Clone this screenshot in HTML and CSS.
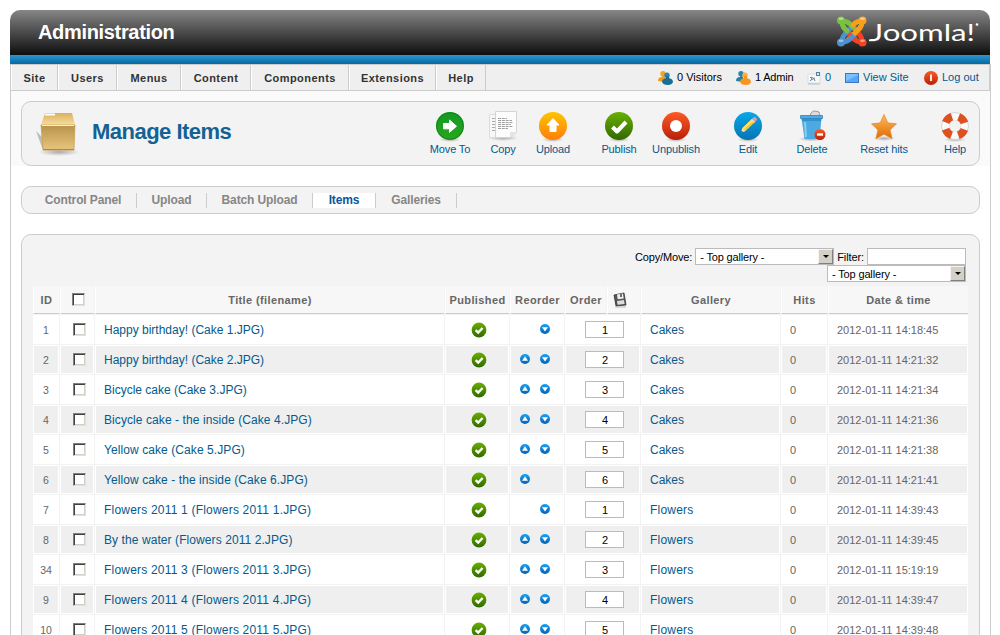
FILE: index.html
```
<!DOCTYPE html>
<html lang="en">
<head>
<meta charset="utf-8">
<title>Administration</title>
<link rel="stylesheet" href="styles.css">
</head>
<body>
<svg class="defs" width="0" height="0">
<defs>
<linearGradient id="gGreen" x2="0" y2="1"><stop stop-color="#69b000"/><stop offset="1" stop-color="#336800"/></linearGradient>
<linearGradient id="gMove" x2="0" y2="1"><stop stop-color="#119a24"/><stop offset="1" stop-color="#2aa51c"/></linearGradient>
<linearGradient id="gUp" x2="0" y2="1"><stop stop-color="#ffc400"/><stop offset="1" stop-color="#ff7e08"/></linearGradient>
<linearGradient id="gRed" x2="0" y2="1"><stop stop-color="#ff5a24"/><stop offset="1" stop-color="#b8200c"/></linearGradient>
<linearGradient id="gBlue" x2="0" y2="1"><stop stop-color="#06a9e8"/><stop offset="1" stop-color="#0873b4"/></linearGradient>
<linearGradient id="gDot" x2="0" y2="1"><stop stop-color="#1ba2f6"/><stop offset="1" stop-color="#0560b5"/></linearGradient>
<linearGradient id="gStar" x2="0" y2="1"><stop stop-color="#ffb95c"/><stop offset="1" stop-color="#de6d00"/></linearGradient>
<linearGradient id="gBox" x2="0" y2="1"><stop stop-color="#b8924c"/><stop offset="1" stop-color="#e8c67c"/></linearGradient>
<linearGradient id="gLid" x2="0" y2="1"><stop stop-color="#d9b25f"/><stop offset="1" stop-color="#f8dd9f"/></linearGradient>
<radialGradient id="gShade"><stop stop-color="#000" stop-opacity=".3"/><stop offset="1" stop-color="#000" stop-opacity="0"/></radialGradient>
<symbol id="ok" viewBox="0 0 16 16"><circle cx="8" cy="8" r="7.4" fill="url(#gGreen)"/><path d="M4.6 8.2l2.6 2.4 4.4-4.6" fill="none" stroke="#fff" stroke-width="2.4"/></symbol>
<symbol id="up" viewBox="0 0 10 10"><circle cx="5" cy="5" r="5" fill="url(#gDot)"/><path d="M5 2.2L8 6.8H2z" fill="#fff"/></symbol>
<symbol id="dn" viewBox="0 0 10 10"><circle cx="5" cy="5" r="5" fill="url(#gDot)"/><path d="M5 7.6L8 3.2H2z" fill="#fff"/></symbol>
<symbol id="shade" viewBox="0 0 32 6"><ellipse cx="16" cy="3" rx="13" ry="3" fill="url(#gShade)"/></symbol>
</defs>
</svg>
<div class="page">
<header class="head">
  <h1>Administration</h1>
  <svg class="logo" width="146" height="36" viewBox="0 0 146 36">
    <g fill="none" stroke-width="4.800" stroke-linecap="round" stroke-linejoin="round">
      <path d="M6 7q0 5 3 8l10 10" stroke="#7ac143"/>
      <path d="M26 7q0 5-3 8L12 26" stroke="#f9a01b"/>
      <path d="M26 28q-5 0-8-3l-8-8" stroke="#f44321"/>
      <path d="M26 28q0-5-3-8l-4-4" stroke="#f44321"/>
      <path d="M6 28q0-5 3-8l5-5" stroke="#5091cd"/>
      <path d="M6 28q5 0 8-3l5-5" stroke="#5091cd"/>
      <path d="M6 7q5 0 8 3l6 6M6 7q0 5 3 8l2 2" stroke="#7ac143"/>
      <path d="M26 7q-5 0-8 3l-1 1M26 7q0 5-3 8l-4 4" stroke="#f9a01b"/>
    </g>
    <circle cx="5" cy="6.500" r="4" fill="#7ac143"/><circle cx="26.500" cy="6.500" r="4" fill="#f9a01b"/><circle cx="5" cy="28.500" r="4" fill="#5091cd"/><circle cx="26.500" cy="28.500" r="4" fill="#f44321"/>
    <g fill="#fff" opacity=".45"><ellipse cx="5" cy="4.800" rx="2.500" ry="1.300"/><ellipse cx="26.500" cy="4.800" rx="2.500" ry="1.300"/><ellipse cx="5" cy="26.800" rx="2.500" ry="1.300"/><ellipse cx="26.500" cy="26.800" rx="2.500" ry="1.300"/></g>
    <path d="M33 26.300h6" stroke="#fff" stroke-width="1.800"/>
    <text class="wordmark" x="34" y="27" textLength="105" lengthAdjust="spacingAndGlyphs">Joomla!</text>
    <circle cx="141" cy="10.500" r="1.300" fill="#fff"/>
  </svg>
</header>
<div class="stripe"></div>
<div class="body">
<nav class="menu">
  <a class="m1">Site</a><a class="m2">Users</a><a class="m3">Menus</a><a class="m4">Content</a><a class="m5">Components</a><a class="m6">Extensions</a><a class="m7">Help</a>
  <div class="status">
    <span class="s1"><svg width="15" height="15" viewBox="0 0 15 15"><circle cx="5" cy="3.700" r="2.700" fill="#f9a21c"/><path d="M0 11q0-4 4-4l1-2 2 2v5z" fill="#f59a18"/><circle cx="9" cy="5.300" r="2.700" fill="#2388b1"/><path d="M4 12q0-3 4-4V6h3v2q4 1 4 4-1 3-5 3-5 0-6-3z" fill="#176f96"/></svg>0 Visitors</span>
    <span class="s2"><svg width="15" height="15" viewBox="0 0 15 15"><circle cx="5" cy="3.700" r="2.700" fill="#2388b1"/><path d="M0 11q0-4 4-4l1-2 2 2v5z" fill="#2481a8"/><circle cx="9" cy="5.300" r="2.700" fill="#fdb033"/><path d="M4 12q0-3 4-4V6h3v2q4 1 4 4-1 3-5 3-5 0-6-3z" fill="#f89420"/></svg>1 Admin</span>
    <a class="s3"><svg width="15" height="14" viewBox="0 0 15 14"><path d="M2 3h12v9H2z" fill="#f8f8f8" stroke="#ddd"/><path d="M2 13h12" stroke="#bbb"/><path d="M4 6l2 2-2 2M5 6q4 1 4 4M5 9l4-2" stroke="#6b8ba5" fill="none"/><rect x="10.500" y="1.500" width="3" height="3" fill="#cfe3f2" stroke="#5580a0"/></svg>0</a>
    <a class="s4"><svg width="14" height="12" viewBox="0 0 14 12"><rect x=".5" y="1.500" width="13" height="9" fill="#7cc0ff" stroke="#3b78bd"/><path d="M1 9l12-6v7H1z" fill="#5aa5f5"/></svg>View Site</a>
    <a class="s5"><svg width="14" height="14" viewBox="0 0 14 14"><circle cx="7" cy="7" r="7" fill="url(#gRed)"/><path d="M7 3.500v6.500" stroke="#fff" stroke-width="1.800"/></svg>Log out</a>
  </div>
</nav>
<section class="toolwrap">
<div class="toolbar">
  <svg class="box" width="48" height="48" viewBox="0 0 48 48"><ellipse cx="24" cy="42" rx="21" ry="4" fill="url(#gShade)"/><path d="M1 21l7 19V28z" fill="#888" opacity=".5"/><path d="M10 3h27l3 12H6z" fill="url(#gLid)"/><path d="M6 15h34l-1 25H8z" fill="url(#gBox)" stroke="#c49c4c" stroke-width=".7"/><path d="M7 15.500h32" stroke="#fff0c0"/><path d="M8 39.500h31" stroke="#b78a38" stroke-width="1.200"/><path d="M10 4.500h10" stroke="#fff" stroke-width="2"/></svg>
  <h2>Manage Items</h2>
  <div class="tools">
    <a class="tool t1"><svg width="32" height="32" viewBox="0 0 32 32"><use href="#shade" y="27" width="32" height="5"/><circle cx="16" cy="16" r="14" fill="url(#gMove)"/><circle cx="16" cy="16" r="13.300" fill="none" stroke="#0b7a15" opacity=".7"/><path d="M9.500 13.500h6V10l7 6.200-7 6.200v-3.600h-6z" fill="#fff" stroke="#fff" stroke-linejoin="round"/></svg>Move To</a>
    <a class="tool t2"><svg width="32" height="32" viewBox="0 0 32 32"><ellipse cx="16" cy="28" rx="15" ry="3" fill="url(#gShade)"/><path d="M2.500 4.500h15v23h-15z" fill="#f7f7f7" stroke="#ddd"/><path d="M5 8.500h3M5 11.500h3M5 14.500h3M5 17.500h3M5 20.500h3" stroke="#aaa"/><path d="M8.500 1.500h21v21l-6 5h-15z" fill="#fcfcfc" stroke="#d4d4d4"/><path d="M29 22l-6 5v-5z" fill="#e4e4e4"/><path d="M11 8.500h9M11 10.500h14M11 12.500h15M11 14.500h13M11 16.500h15M11 18.500h10" stroke="#888" stroke-width=".8" stroke-dasharray="3 .8"/></svg>Copy</a>
    <a class="tool t3"><svg width="32" height="32" viewBox="0 0 32 32"><use href="#shade" y="27" width="32" height="5"/><circle cx="16" cy="16" r="14" fill="url(#gUp)"/><path d="M16 8.500l6 6.500h-3v6.500h-6V15h-3z" fill="#fff" stroke="#fff" stroke-linejoin="round"/></svg>Upload</a>
    <a class="tool t4"><svg width="32" height="32" viewBox="0 0 32 32"><use href="#shade" y="27" width="32" height="5"/><circle cx="16" cy="16" r="14" fill="url(#gGreen)"/><path d="M9.500 17l4.500 4.500 9-9.500" fill="none" stroke="#fff" stroke-width="4" stroke-linejoin="round"/></svg>Publish</a>
    <a class="tool t5"><svg width="32" height="32" viewBox="0 0 32 32"><use href="#shade" y="27" width="32" height="5"/><circle cx="16" cy="16" r="14" fill="url(#gRed)"/><circle cx="16" cy="16" r="6" fill="#fff"/></svg>Unpublish</a>
    <a class="tool t6"><svg width="32" height="32" viewBox="0 0 32 32"><use href="#shade" y="27" width="32" height="5"/><circle cx="16" cy="16" r="14" fill="url(#gBlue)"/><path d="M9 22.500l1.500-4.500 9.500-9 3 3-9.500 9z" fill="#ffc926"/><path d="M10.500 18l1.500 1.200 9.500-8.700L20 9z" fill="#ffe36c"/><path d="M20 9l2-2q3 0 3 3l-2 2z" fill="#e49a9a"/><path d="M19 10l1-1 3 3-1 1z" fill="#ddd"/><path d="M9 22.500l1.500-4.500 3 3z" fill="#f6e2b8"/><path d="M9 22.500l.6-1.800 1.200 1.200z" fill="#222"/></svg>Edit</a>
    <a class="tool t7"><svg width="32" height="32" viewBox="0 0 32 32"><ellipse cx="15" cy="29" rx="13" ry="2.500" fill="url(#gShade)"/><path d="M14 6q1-5 5-5l4 1 1 4" fill="#ddd" stroke="#999"/><path d="M5.500 8h20l-2 21h-15z" fill="#4ca9e2"/><path d="M5.500 8h20l-.4 3h-19z" fill="#3591cc"/><path d="M4.500 5.500h22v3h-22z" fill="#4cabe2" stroke="#2d87be" stroke-width=".8"/><path d="M9 12l1 15" stroke="#84cff5" stroke-width="2"/><circle cx="24" cy="24.500" r="5.500" fill="url(#gRed)"/><path d="M21 24.500h6" stroke="#fff" stroke-width="2.400"/></svg>Delete</a>
    <a class="tool t8"><svg width="32" height="32" viewBox="0 0 32 32"><use href="#shade" y="26" width="32" height="5"/><path d="M16 4.500l3.800 8.300 8.700 1-6.400 6.200 2 8.700L16 24.300l-8.100 4.400 2-8.700-6.400-6.200 8.700-1z" fill="url(#gStar)" stroke="#e28a2a" stroke-width=".7" stroke-linejoin="round"/></svg>Reset hits</a>
    <a class="tool t9"><svg width="32" height="32" viewBox="0 0 32 32"><use href="#shade" y="27" width="32" height="5"/><circle cx="16" cy="16" r="9.800" fill="none" stroke="#fafafa" stroke-width="8"/><circle cx="16" cy="16" r="13.500" fill="none" stroke="#ccc" stroke-width=".8"/><circle cx="16" cy="16" r="9.800" fill="none" stroke="#dd5120" stroke-width="8" stroke-dasharray="8.600 6.794" stroke-dashoffset="-3.397"/><circle cx="16" cy="16" r="5.600" fill="#f3f3f3" stroke="#ddd" stroke-width=".6"/></svg>Help</a>
  </div>
</div>
</section>
<nav class="submenu"><a class="b1">Control Panel</a><a class="b2">Upload</a><a class="b3">Batch Upload</a><a class="b4 active">Items</a><a class="b5">Galleries</a></nav>
<main class="panel">
  <div class="filters">
    <div class="line"><span class="clabel">Copy/Move:</span><span class="select wide">- Top gallery -<i></i></span><span class="flabel">Filter:</span><span class="input"></span></div>
    <div class="line"><span class="select">- Top gallery -<i></i></span></div>
  </div>
  <div class="grid">
    <div class="row th"><b>ID</b><b><s></s></b><b>Title (filename)</b><b>Published</b><b>Reorder</b><b class="split"><span>Order</span><span><svg width="16" height="16" viewBox="0 0 16 16"><path d="M2 3l10-2 2 12-10 1z" fill="#555" stroke="#333" stroke-width=".8"/><path d="M5 2.500l6-1 .7 5-6 .8z" fill="#eee"/><path d="M9 2v3" stroke="#444" stroke-width="1.500"/><path d="M5 9l7-1 .6 4-7 .8z" fill="#ddd"/><path d="M3 15h11" stroke="#bbb"/></svg></span></b><b>Gallery</b><b>Hits</b><b>Date &amp; time</b></div>
    <div class="row"><span>1</span><span><s></s></span><a>Happy birthday! (Cake 1.JPG)</a><span><svg class="ok"><use href="#ok"/></svg></span><span class="re"><em></em><svg><use href="#dn"/></svg></span><span><u>1</u></span><a>Cakes</a><span>0</span><span>2012-01-11 14:18:45</span></div>
    <div class="row"><span>2</span><span><s></s></span><a>Happy birthday! (Cake 2.JPG)</a><span><svg class="ok"><use href="#ok"/></svg></span><span class="re"><svg><use href="#up"/></svg><svg><use href="#dn"/></svg></span><span><u>2</u></span><a>Cakes</a><span>0</span><span>2012-01-11 14:21:32</span></div>
    <div class="row"><span>3</span><span><s></s></span><a>Bicycle cake (Cake 3.JPG)</a><span><svg class="ok"><use href="#ok"/></svg></span><span class="re"><svg><use href="#up"/></svg><svg><use href="#dn"/></svg></span><span><u>3</u></span><a>Cakes</a><span>0</span><span>2012-01-11 14:21:34</span></div>
    <div class="row"><span>4</span><span><s></s></span><a class="mid">Bicycle cake - the inside (Cake 4.JPG)</a><span><svg class="ok"><use href="#ok"/></svg></span><span class="re"><svg><use href="#up"/></svg><svg><use href="#dn"/></svg></span><span><u>4</u></span><a>Cakes</a><span>0</span><span>2012-01-11 14:21:36</span></div>
    <div class="row"><span>5</span><span><s></s></span><a class="mid">Yellow cake (Cake 5.JPG)</a><span><svg class="ok"><use href="#ok"/></svg></span><span class="re"><svg><use href="#up"/></svg><svg><use href="#dn"/></svg></span><span><u>5</u></span><a>Cakes</a><span>0</span><span>2012-01-11 14:21:38</span></div>
    <div class="row"><span>6</span><span><s></s></span><a class="mid">Yellow cake - the inside (Cake 6.JPG)</a><span><svg class="ok"><use href="#ok"/></svg></span><span class="re"><svg><use href="#up"/></svg><em></em></span><span><u>6</u></span><a>Cakes</a><span>0</span><span>2012-01-11 14:21:41</span></div>
    <div class="row"><span>7</span><span><s></s></span><a class="open">Flowers 2011 1 (Flowers 2011 1.JPG)</a><span><svg class="ok"><use href="#ok"/></svg></span><span class="re"><em></em><svg><use href="#dn"/></svg></span><span><u>1</u></span><a class="open">Flowers</a><span>0</span><span>2012-01-11 14:39:43</span></div>
    <div class="row"><span>8</span><span><s></s></span><a class="mid">By the water (Flowers 2011 2.JPG)</a><span><svg class="ok"><use href="#ok"/></svg></span><span class="re"><svg><use href="#up"/></svg><svg><use href="#dn"/></svg></span><span><u>2</u></span><a class="open">Flowers</a><span>0</span><span>2012-01-11 14:39:45</span></div>
    <div class="row"><span>34</span><span><s></s></span><a class="open">Flowers 2011 3 (Flowers 2011 3.JPG)</a><span><svg class="ok"><use href="#ok"/></svg></span><span class="re"><svg><use href="#up"/></svg><svg><use href="#dn"/></svg></span><span><u>3</u></span><a class="open">Flowers</a><span>0</span><span>2012-01-11 15:19:19</span></div>
    <div class="row"><span>9</span><span><s></s></span><a class="open">Flowers 2011 4 (Flowers 2011 4.JPG)</a><span><svg class="ok"><use href="#ok"/></svg></span><span class="re"><svg><use href="#up"/></svg><svg><use href="#dn"/></svg></span><span><u>4</u></span><a class="open">Flowers</a><span>0</span><span>2012-01-11 14:39:47</span></div>
    <div class="row"><span>10</span><span><s></s></span><a class="open">Flowers 2011 5 (Flowers 2011 5.JPG)</a><span><svg class="ok"><use href="#ok"/></svg></span><span class="re"><svg><use href="#up"/></svg><svg><use href="#dn"/></svg></span><span><u>5</u></span><a class="open">Flowers</a><span>0</span><span>2012-01-11 14:39:48</span></div>
  </div>
</main>
</div>
</div>
</body>
</html>
```
FILE: styles.css
```
* { box-sizing: border-box; }
body { margin: 0; background: #fff; font: 11px "Liberation Sans", Arial, sans-serif; color: #000; }
.defs { display: block; }
.page { height: 635px; padding: 10px 9px 0 10px; overflow: hidden; }
a { color: #025a8d; }
.head { display: flex; justify-content: space-between; width: 980px; height: 45px; padding: 0 8px 0 28px; border-radius: 10px 10px 0 0; background: linear-gradient(#868686, #0e0e0e); }
h1 { margin: 0; font-size: 20px; line-height: 44px; letter-spacing: -.33px; color: #fff; }
.logo { margin-top: 4px; }
.wordmark { font: 400 24px Lato, sans-serif; fill: #fff; }
.stripe { width: 980px; height: 9px; background: linear-gradient(#2d96cd, #0469a5); }
.body { width: 981px; height: 571px; border: solid #ccc; border-width: 0 1px; overflow: hidden; }
.menu { display: flex; height: 27px; width: 979px; border-top: 1px solid #ccc; border-bottom: 1px solid #ccc; border-right: 1px solid #ccc; background: #efefef; font-weight: bold; line-height: 26px; }
.menu > a { color: #333; text-align: center; letter-spacing: .45px; border-right: 1px solid #ccc; border-left: 1px solid #fff; }
.m1 { width: 47px; } .m2 { width: 59px; } .m3 { width: 64px; } .m4 { width: 70px; } .m5 { width: 98px; } .m6 { width: 87px; } .m7 { width: 50px; }
.status { display: flex; margin-left: auto; font-weight: normal; font-size: 11px; line-height: 25px; }
.status > * { display: flex; align-items: center; gap: 4px; white-space: nowrap; }
.s1 { width: 78px; } .s2 { width: 70px; letter-spacing: -.2px; } .s3 { width: 39px; } .s4 { width: 79px; } .s5 { width: 65px; }
.toolwrap { height: 75px; padding: 10px 0 0 10px; background: #fafafa; }
.toolbar { display: flex; width: 959px; height: 65px; padding-left: 13px; border: 1px solid #ccc; border-radius: 10px; background: #f3f3f3; }
.box { margin-top: 8px; }
h2 { margin: 0 0 0 9px; font-size: 22px; line-height: 59px; letter-spacing: -.52px; color: #146295; }
.tools { display: flex; margin-left: auto; padding-top: 8px; }
.tool { display: flex; flex-direction: column; align-items: center; width: 48px; white-space: nowrap; font-size: 11px; line-height: 15px; letter-spacing: -.12px; }
.t2 { margin-left: 5px; } .t3 { margin-left: 2px; } .t4 { margin-left: 18px; } .t5 { margin-left: 9px; } .t6 { margin-left: 24px; } .t7 { margin-left: 16px; } .t8 { margin-left: 24px; } .t9 { margin-left: 23px; }
.submenu { display: flex; width: 959px; height: 28px; margin: 20px 0 0 10px; padding: 6px 0 0 8px; border: 1px solid #ccc; border-radius: 10px; background: #f3f3f3; font-size: 12px; font-weight: bold; line-height: 15px; letter-spacing: -.12px; }
.submenu a { height: 15px; text-align: center; white-space: nowrap; color: #868686; border-right: 1px solid #ccc; }
.submenu .active { color: #0b55a0; background: #fff; }
.b1 { width: 107px; } .b2 { width: 70px; } .b3 { width: 106px; } .b4 { width: 63px; } .b5 { width: 81px; }
.panel { width: 959px; height: 480px; margin: 20px 0 0 10px; padding: 13px 11px 0; border: 1px solid #ccc; border-radius: 10px; background: #f3f3f3; }
.filters { height: 38px; padding-right: 2px; }
.line { display: flex; justify-content: flex-end; height: 17px; line-height: 18px; white-space: nowrap; }
.select { display: flex; justify-content: space-between; width: 139px; height: 17px; padding-left: 4px; border: 1px solid #bbb; background: #fff; line-height: 17px; letter-spacing: -.15px; }
.clabel { letter-spacing: -.15px; }
.wide { margin-left: 3px; }
.select i { width: 15px; height: 15px; border: 1px solid; border-color: #f4f2ee #808080 #808080 #f4f2ee; background: #d4d0c8; display: flex; align-items: center; justify-content: center; }
.select i::after { content: ""; border: 3px solid transparent; border-top-color: #000; border-bottom: 0; }
.flabel { margin: 0 3px; letter-spacing: -.1px; }
.input { width: 99px; border: 1px solid #bbb; background: #fff; }
.grid { display: grid; gap: 1px; }
.row { display: grid; grid-template-columns: 26px 34px 349px 64px 54px 75px 139px 46px 140px; column-gap: 1px; height: 29px; }
.row > * { display: flex; align-items: center; justify-content: center; min-width: 0; border: 1px solid #fff; background: #fff; color: #666; white-space: nowrap; }
.row:nth-child(odd) > * { background: #efefef; }
.row > a { justify-content: flex-start; padding-left: 8px; font-size: 12px; color: #025a8d; }
.row > .mid { letter-spacing: .08px; }
.row > .open { letter-spacing: .2px; }
.row > :nth-child(8), .row:not(.th) > :nth-child(9) { justify-content: flex-start; padding-left: 8px; }
.row > :nth-child(1) { font-size: 10.5px; }
.row.th { height: 28px; }
.row.th > *, .row.th .split span { background: #f7f7f7; border: solid; border-width: 0 0 1px 1px; border-color: #fff #fff #ccc #fff; letter-spacing: .38px; font-size: 11px; }
.row.th > :nth-child(8) { justify-content: center; padding: 0; }
.row.th > .split { display: grid; grid-template-columns: 41px 33px; gap: 1px; border: 0; background: none; align-items: stretch; justify-content: start; }
.split span { display: flex; align-items: center; justify-content: center; }
.split span + span { padding-right: 8px; }
s { width: 13px; height: 13px; margin-left: 5px; border: 1px solid; border-color: #808080 #e4e0d8 #e4e0d8 #808080; background: #fff; box-shadow: inset 1px 1px #404040, inset -1px -1px #d4d0c8; }
.th s { margin: 0 0 0 1px; }
.ok { width: 16px; height: 16px; margin-left: 4px; }
.row > .re { gap: 10px; padding: 0 4px 1px 0; }
.re svg, .re em { width: 10px; height: 10px; }
.row u { width: 39px; height: 17px; margin-left: 4px; border: 1px solid #bbb; background: #fff; color: #000; text-decoration: none; text-align: center; line-height: 16px; padding-left: 1px; }
```
